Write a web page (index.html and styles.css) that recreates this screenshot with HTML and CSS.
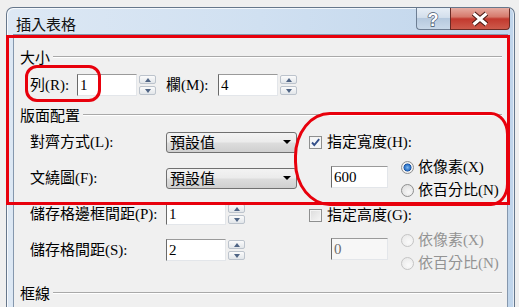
FILE: index.html
```html
<!DOCTYPE html>
<html lang="zh-Hant">
<head>
<meta charset="utf-8">
<title>插入表格</title>
<link rel="stylesheet" href="styles.css">
</head>
<body>
<div class="window">
  <div class="titlebar">
    <span class="title">插入表格</span>
    <div class="caption-btns">
      <div class="btn-help">
        <svg width="34" height="22" viewBox="0 0 34 22"><text x="17" y="17.5" text-anchor="middle" class="help-q">?</text></svg>
      </div>
      <div class="btn-close">
        <svg width="60" height="22" viewBox="0 0 60 22">
          <path d="M23.5 5.5 L36.5 16.5 M36.5 5.5 L23.5 16.5" stroke="#4a1a14" stroke-width="5.2" fill="none"/>
          <path d="M23.5 5.5 L36.5 16.5 M36.5 5.5 L23.5 16.5" stroke="#ffffff" stroke-width="3" fill="none"/>
        </svg>
      </div>
    </div>
  </div>
  <div class="client">
    <div class="group-head"><span class="gh-text">大小</span><i class="rule"></i></div>
    <div class="size-row">
      <span class="lbl lbl-rows">列(R):</span>
      <div class="num">
        <div class="field">1</div>
        <div class="spin"><span class="sp up"></span><span class="sp down"></span></div>
      </div>
      <span class="lbl lbl-cols">欄(M):</span>
      <div class="num">
        <div class="field">4</div>
        <div class="spin"><span class="sp up"></span><span class="sp down"></span></div>
      </div>
    </div>

    <div class="group-head gh2"><span class="gh-text">版面配置</span><i class="rule"></i></div>
    <div class="layout">
      <div class="left-col">
        <div class="row"><span class="lbl wide">對齊方式(L):</span><div class="select"><span>預設值</span><i class="arrow"></i></div></div>
        <div class="row"><span class="lbl wide">文繞圖(F):</span><div class="select"><span>預設值</span><i class="arrow"></i></div></div>
        <div class="row"><span class="lbl wide">儲存格邊框間距(P):</span>
          <div class="num"><div class="field">1</div><div class="spin"><span class="sp up"></span><span class="sp down"></span></div></div>
        </div>
        <div class="row"><span class="lbl wide">儲存格間距(S):</span>
          <div class="num"><div class="field">2</div><div class="spin"><span class="sp up"></span><span class="sp down"></span></div></div>
        </div>
      </div>
      <div class="right-col">
        <div class="check-row">
          <span class="checkbox checked"><svg width="11" height="11" viewBox="0 0 11 11"><path d="M2 5.5 L4.3 8 L9.2 2.2" stroke="#34508a" stroke-width="1.9" fill="none"/></svg></span>
          <span>指定寬度(H):</span>
        </div>
        <div class="sub">
          <div class="field sub-field">600</div>
          <div class="radios">
            <div class="radio-row"><span class="radio on"></span><span>依像素(X)</span></div>
            <div class="radio-row"><span class="radio"></span><span>依百分比(N)</span></div>
          </div>
        </div>
        <div class="check-row cr2">
          <span class="checkbox"></span>
          <span>指定高度(G):</span>
        </div>
        <div class="sub">
          <div class="field sub-field disabled f2">0</div>
          <div class="radios">
            <div class="radio-row off"><span class="radio dis"></span><span>依像素(X)</span></div>
            <div class="radio-row off"><span class="radio dis"></span><span>依百分比(N)</span></div>
          </div>
        </div>
      </div>
    </div>

    <div class="group-head gh3"><span class="gh-text">框線</span><i class="rule"></i></div>
  </div>
</div>

<div class="mark mark-main"></div>
<div class="mark mark-rows"></div>
<div class="mark mark-width"></div>
</body>
</html>
```

FILE: styles.css
```css
html, body {
  margin: 0;
  padding: 0;
}
html {
  background: #efefef;
}
body {
  position: relative;
  width: 519px;
  height: 307px;
  overflow: hidden;
  box-sizing: border-box;
  padding: 7px 0 0 6px;
  font-family: "Liberation Serif", "Noto Sans CJK TC", serif;
  font-size: 15px;
  line-height: 18px;
  color: #000;
}

/* window frame */
.window {
  width: 509px;
  height: 300px;
  box-sizing: border-box;
  border: 1px solid #66778b;
  border-bottom: none;
  border-radius: 7px 7px 0 0;
  background: linear-gradient(90deg, #dde8f4 0%, #d0e0f1 50%, #c0d5eb 100%);
  box-shadow: inset 1px 1px 0 rgba(255,255,255,.75), inset -1px 0 0 rgba(255,255,255,.6);
  padding: 0 6px;
  display: flex;
  flex-direction: column;
  overflow: hidden;
}
.titlebar {
  height: 26px;
  display: flex;
  justify-content: space-between;
  align-items: flex-start;
  flex: none;
}
.title {
  margin: 7px 0 0 3px;
  font-family: "Noto Sans CJK TC", sans-serif;
  font-size: 15px;
  line-height: 18px;
  color: #111;
}
.caption-btns {
  display: flex;
  margin-right: -2px;
}
.btn-help, .btn-close {
  height: 22px;
  box-sizing: border-box;
}
.btn-help {
  width: 34px;
  border: 1px solid #6d7e93;
  border-top: none;
  border-right: none;
  border-radius: 0 0 0 4px;
  background: linear-gradient(180deg, #e7eef6 0%, #d3dfec 45%, #b6c9de 50%, #c9d9ea 100%);
}
.btn-close {
  width: 60px;
  border: 1px solid #6b2b25;
  border-top: none;
  border-radius: 0 0 4px 0;
  background: linear-gradient(180deg, #e6aba1 0%, #d67a6c 42%, #c2392e 52%, #cd5a4b 100%);
}
.btn-help svg, .btn-close svg {
  display: block;
  margin-left: -1px;
}
.help-q {
  font-family: "Liberation Sans", sans-serif;
  font-weight: bold;
  font-size: 18px;
  fill: #ffffff;
  stroke: #415167;
  stroke-width: 1.3px;
  paint-order: stroke;
}

/* client */
.client {
  flex: 1;
  min-height: 0;
  overflow: hidden;
  background: #f0f0f0;
  border: 1px solid #8597ad;
  border-bottom: none;
  padding: 13px 5px 0 6px;
}
.group-head {
  display: flex;
  align-items: center;
  height: 18px;
}
.gh-text {
  font-family: "Noto Sans CJK TC", sans-serif;
}
.rule {
  flex: 1;
  height: 0;
  margin-left: 3px;
  border-top: 1px solid #a9a9a9;
  border-bottom: 1px solid #ffffff;
}
.gh2 { margin-top: 10px; }
.gh3 { margin-top: 10px; }

.size-row {
  margin-top: 8px;
  height: 22px;
  display: flex;
  align-items: center;
  padding-left: 10px;
}
.lbl { white-space: nowrap; }
.lbl-rows { width: 47px; }
.lbl-cols { width: 52px; margin-left: 10px; }

.num {
  display: flex;
  align-items: center;
}
.field {
  width: 60px;
  height: 22px;
  box-sizing: border-box;
  background: #fff;
  border-style: solid;
  border-width: 1px;
  border-color: #9a9a9a #e3e6ea #e3e6ea #6a6a6a;
  padding-left: 2px;
  line-height: 20px;
  font-family: "Liberation Serif", serif;
  font-size: 15px;
}
.spin {
  display: flex;
  flex-direction: column;
  gap: 2px;
  margin-left: 2px;
}
.sp {
  width: 17px;
  height: 9px;
  box-sizing: border-box;
  border: 1px solid #bcc3cc;
  border-radius: 2px;
  background: linear-gradient(180deg, #fbfbfb, #e2e6ea);
  display: flex;
  align-items: center;
  justify-content: center;
}
.sp::after {
  content: "";
  width: 0;
  height: 0;
  border-left: 3.5px solid transparent;
  border-right: 3.5px solid transparent;
}
.up::after { border-bottom: 4px solid #4f6484; }
.down::after { border-top: 4px solid #4f6484; }

.layout {
  margin-top: 7px;
  display: flex;
  padding-left: 10px;
}
.left-col {
  width: 279px;
  display: flex;
  flex-direction: column;
  gap: 14px;
}
.row {
  height: 22px;
  display: flex;
  align-items: center;
}
.wide { width: 136px; }
.select {
  width: 131px;
  height: 21px;
  box-sizing: border-box;
  border: 1px solid #707070;
  border-radius: 3px;
  background: linear-gradient(180deg, #f3f3f3 0%, #ebebeb 48%, #dddddd 52%, #cfcfcf 100%);
  display: flex;
  align-items: center;
  padding-left: 3px;
  font-family: "Noto Sans CJK TC", sans-serif;
}
.arrow {
  margin-left: auto;
  margin-right: 5px;
  width: 0;
  height: 0;
  border-left: 4px solid transparent;
  border-right: 4px solid transparent;
  border-top: 4px solid #000;
}

.right-col {
  display: flex;
  flex-direction: column;
}
.check-row {
  height: 22px;
  display: flex;
  align-items: center;
}
.cr2 { margin-top: 3px; }
.checkbox {
  width: 13px;
  height: 13px;
  box-sizing: border-box;
  border: 1px solid #8e8f8f;
  background: linear-gradient(135deg, #dcdcdc 0%, #f6f6f6 100%);
  box-shadow: inset 0 0 0 1px #f4f4f4;
  margin-right: 5px;
  display: flex;
  align-items: center;
  justify-content: center;
}
.checkbox.checked {
  background: #f4f6f8;
}
.checkbox svg { display: block; }
.sub {
  margin-top: 3px;
  display: flex;
  align-items: flex-start;
}
.sub-field {
  width: 57px;
  margin-left: 22px;
  margin-top: 10px;
}
.sub-field.f2 { margin-top: 9px; }
.field.disabled {
  background: #f7f7f7;
  color: #6d6d6d;
}
.radios {
  margin-left: 13px;
  display: flex;
  flex-direction: column;
  gap: 1px;
}
.radio-row {
  height: 22px;
  display: flex;
  align-items: center;
  white-space: nowrap;
}
.radio-row.off { color: #939393; }
.radio {
  width: 13px;
  height: 13px;
  box-sizing: border-box;
  border-radius: 50%;
  border: 1px solid #8e8f8f;
  background: radial-gradient(circle at 60% 65%, #f8f8f8 0%, #e2e2e2 70%);
  margin-right: 4px;
  flex: none;
}
.radio.on {
  background: radial-gradient(circle at 50% 50%, #7fb8ee 0%, #2a6fc4 38%, #1c4f96 48%, #f2f2f2 55%, #e6e6e6 100%);
}
.radio.dis {
  border-color: #c4c4c4;
  background: radial-gradient(circle at 60% 65%, #fafafa 0%, #ececec 70%);
}

/* red annotation marks drawn over the screenshot */
.mark {
  position: absolute;
  box-sizing: border-box;
  border: 3px solid #e8000c;
  pointer-events: none;
}
.mark-main {
  left: 6px;
  top: 35px;
  width: 504px;
  height: 170px;
}
.mark-rows {
  left: 25px;
  top: 65px;
  width: 76px;
  height: 37px;
  border-radius: 12px;
}
.mark-width {
  left: 294px;
  top: 112px;
  width: 215px;
  height: 94px;
  border-radius: 36px 18px 18px 36px / 44px 22px 22px 44px;
}
```
